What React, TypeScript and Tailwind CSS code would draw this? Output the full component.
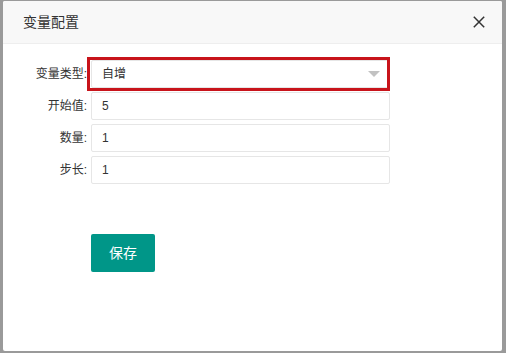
const rows = [
  { label: '开始值:', value: '5' },
  { label: '数量:', value: '1' },
  { label: '步长:', value: '1' },
]

function Row({ label, children }: { label: string; children: React.ReactNode }) {
  return (
    <div className="flex items-center gap-[4px]">
      <label className="w-[84px] text-right text-[12px] text-[#333] leading-[28px]">{label}</label>
      {children}
    </div>
  )
}

export default function App() {
  return (
    <div
      className="w-[506px] h-[353px] bg-[#9a9a9a] pt-[1px] pl-[3px] overflow-hidden"
      style={{ fontFamily: '"Liberation Sans", "Noto Sans CJK SC", sans-serif' }}
    >
      <div className="w-[499px] h-[350px] bg-white rounded-[2px] overflow-hidden">
        <div className="h-[43px] bg-[#f8f8f8] border-b border-[#eee] flex items-center justify-between pl-[20px] pr-[17px]">
          <span className="text-[14px] text-[#333]">变量配置</span>
          <svg width="12" height="12" viewBox="0 0 12 12" className="text-[#333]">
            <path d="M0.8 0.8 L11.2 11.2 M11.2 0.8 L0.8 11.2" stroke="currentColor" strokeWidth="1.5" fill="none" />
          </svg>
        </div>

        <div className="pt-[16px] flex flex-col gap-[4px]">
          <Row label="变量类型:">
            <div className="relative">
              <div className="w-[299px] h-[28px] border border-[#e6e6e6] rounded-[2px] flex items-center justify-between pl-[10px] pr-[9px] text-[12px] text-[#333]">
                <span>自增</span>
                <svg width="12" height="6" viewBox="0 0 12 6">
                  <path d="M0 0 L12 0 L6 6 Z" fill="#c2c2c2" />
                </svg>
              </div>
              <div className="absolute left-[-4px] top-[-3px] w-[303px] h-[34px] border-[3px] border-[#c8141b] pointer-events-none" />
            </div>
          </Row>
          {rows.map((r) => (
            <Row key={r.label} label={r.label}>
              <div className="w-[299px] h-[28px] border border-[#e6e6e6] rounded-[2px] flex items-center pl-[10px] text-[12px] text-[#333]">
                {r.value}
              </div>
            </Row>
          ))}
        </div>

        <div className="pl-[88px] mt-[50px]">
          <button className="w-[64px] h-[38px] bg-[#009688] rounded-[2px] text-white text-[14px]">保存</button>
        </div>
      </div>
    </div>
  )
}
